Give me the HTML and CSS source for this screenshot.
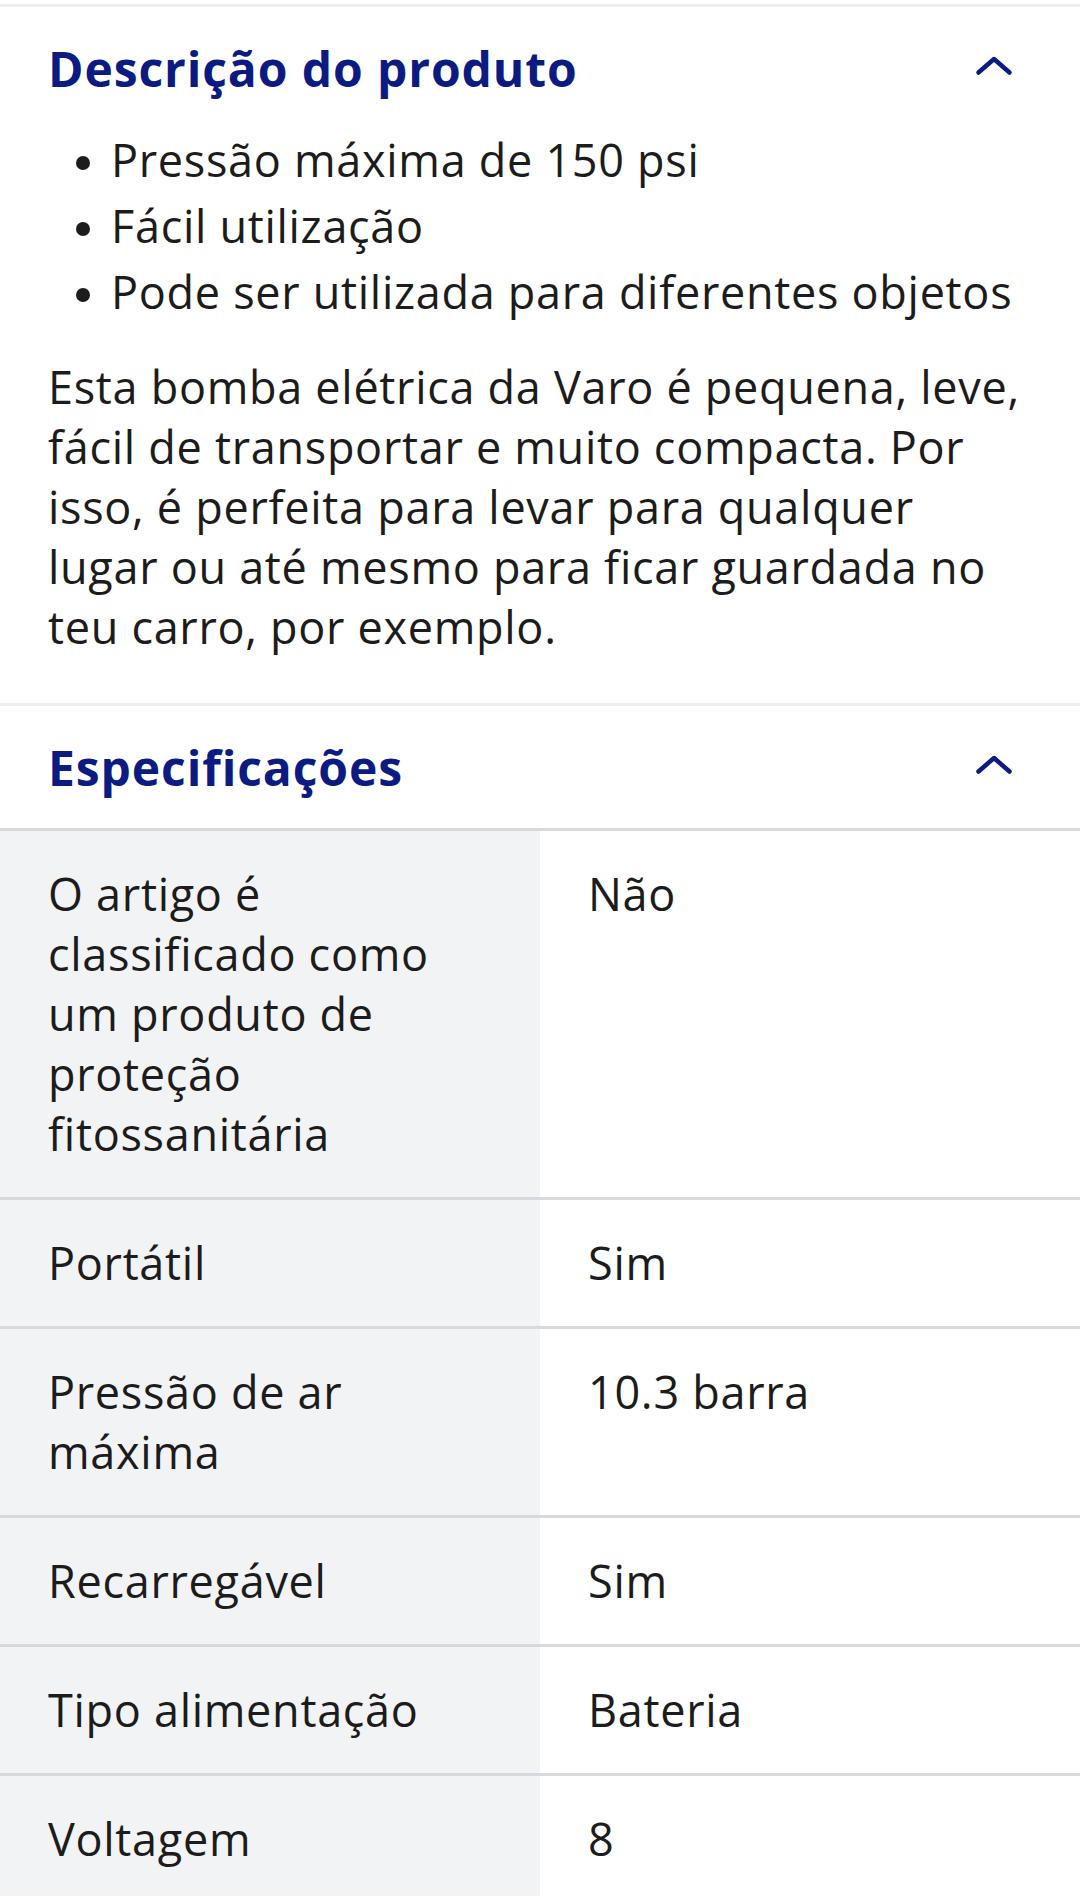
FILE: index.html
```html
<!DOCTYPE html>
<html lang="pt">
<head>
<meta charset="utf-8">
<title>Descrição do produto</title>
<link rel="stylesheet" href="styles.css">
</head>
<body>
<section class="panel panel-first">
  <div class="panel-head">
    <h2 class="panel-title">Descrição do produto</h2>
    <span class="chevron"><svg viewBox="0 0 72 72" width="72" height="72"><path d="M18.5 39.5 L34 26 L49.5 39.5"/></svg></span>
  </div>
  <ul class="bullets">
    <li>Pressão máxima de 150 psi</li>
    <li>Fácil utilização</li>
    <li>Pode ser utilizada para diferentes objetos</li>
  </ul>
  <p class="desc">Esta bomba elétrica da Varo é pequena, leve, fácil de transportar e muito compacta. Por isso, é perfeita para levar para qualquer lugar ou até mesmo para ficar guardada no teu carro, por exemplo.</p>
</section>
<section class="panel">
  <div class="panel-head panel-head-specs">
    <h2 class="panel-title">Especificações</h2>
    <span class="chevron"><svg viewBox="0 0 72 72" width="72" height="72"><path d="M18.5 39.5 L34 26 L49.5 39.5"/></svg></span>
  </div>
  <div class="specs">
    <div class="row"><div class="key">O artigo é classificado como um produto de proteção fitossanitária</div><div class="val">Não</div></div>
    <div class="row"><div class="key">Portátil</div><div class="val">Sim</div></div>
    <div class="row"><div class="key">Pressão de ar máxima</div><div class="val">10.3 barra</div></div>
    <div class="row"><div class="key">Recarregável</div><div class="val">Sim</div></div>
    <div class="row"><div class="key">Tipo alimentação</div><div class="val">Bateria</div></div>
    <div class="row"><div class="key">Voltagem</div><div class="val">8</div></div>
  </div>
</section>
</body>
</html>
```
FILE: styles.css
```css
html, body {
  margin: 0;
  padding: 0;
  background: #ffffff;
}
body {
  font-family: "Open Sans", "Noto Sans", sans-serif;
  color: #1c1c1c;
  font-size: 45px;
  line-height: 60px;
  letter-spacing: 0.7px;
  overflow: hidden;
}
.panel {
  border-top: 3px solid #eeeeee;
}
.panel-first {
  margin-top: 4px;
}
.panel-head {
  display: flex;
  justify-content: space-between;
  align-items: center;
  padding: 26px 48px 22px 48px;
}
.panel-head-specs {
  padding-bottom: 24px;
}
.panel-title {
  margin: 0;
  font-size: 48px;
  line-height: 66px;
  font-weight: 700;
  color: #0b1b82;
  letter-spacing: 0.9px;
}
.chevron {
  display: block;
  width: 72px;
  height: 72px;
}
.chevron svg {
  display: block;
}
.chevron path {
  fill: none;
  stroke: #0b1b82;
  stroke-width: 4.5;
  stroke-linecap: round;
  stroke-linejoin: round;
}
.bullets {
  margin: 0;
  padding: 0 40px 0 111px;
  line-height: 66px;
}
.bullets li::marker {
  font-size: 40px;
}
.desc {
  margin: 32px 0 0 0;
  padding: 0 48px 46px 48px;
}
.specs {
  display: flex;
  flex-direction: column;
}
.row {
  display: grid;
  grid-template-columns: 540px 1fr;
  border-top: 3px solid #d6d9de;
}
.key {
  background: #f2f3f5;
  padding: 33px 48px;
}
.val {
  background: #ffffff;
  padding: 33px 48px;
}
```
